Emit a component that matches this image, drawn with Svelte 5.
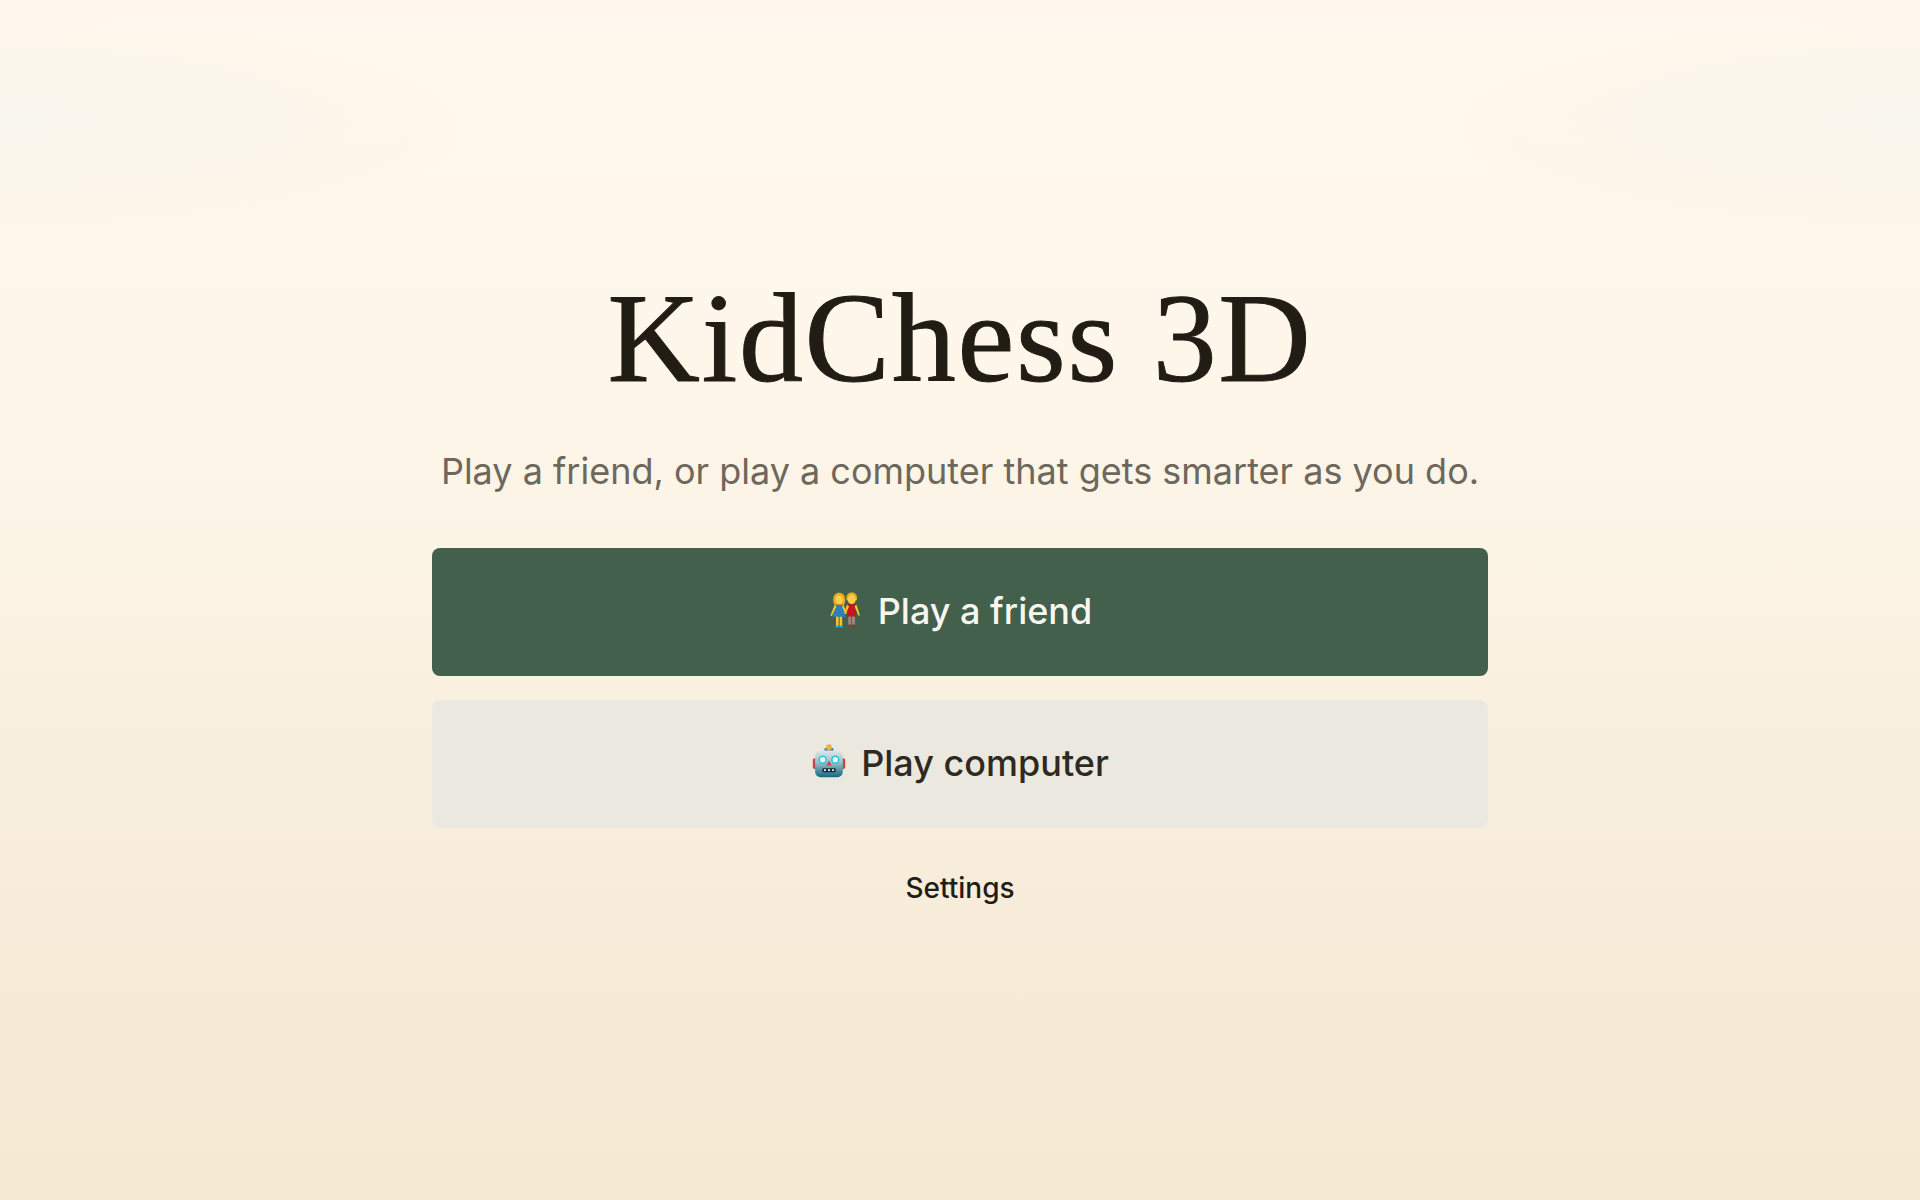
<script lang="ts">
  const subtitle = 'Play a friend, or play a computer that gets smarter as you do.';
</script>

<main class="home">
  <h1>KidChess 3D</h1>
  <p class="subtitle">{subtitle}</p>
  <div class="actions">
    <button class="btn primary">
      <svg class="emoji couple" viewBox="5 2 36 36" aria-hidden="true">
        <!-- woman -->
        <path d="M13 25h2.6v11h-2.6zM16.6 25h2.6v11h-2.6z" fill="#f4c534" />
        <path d="M12.6 35.4h3.2v2.2h-3.2zM16.4 35.4h3.2v2.2h-3.2z" fill="#2aa3d8" />
        <path d="M12.4 14.5h7.4l3 12.2H9.6z" fill="#2f7fbd" />
        <path d="M11.8 14.6 7.4 25.4l1.5.7 4.5-9.6zM20.4 14.6l3.4 8.6-1.5.8-3.3-7.4z" fill="#f4c534" />
        <path d="M10.2 9.4c0-4 2.6-6.6 6-6.6s6 2.6 6 6.6c0 2.4-.4 4-1.2 5.4h-9.6c-.8-1.4-1.2-3-1.2-5.4z" fill="#eba91f" />
        <ellipse cx="16.2" cy="9.6" rx="3.9" ry="4.4" fill="#f7d046" />
        <!-- man -->
        <path d="M25.2 25h3v10.6h-3zM29 25h3v10.6h-3z" fill="#9c8878" />
        <path d="M24.8 34.6h3.6v3h-3.6zM28.8 34.6h3.6v3h-3.6z" fill="#6d4a3a" />
        <path d="M23.8 14.2h9.8l-.9 12.2h-8z" fill="#c4161c" />
        <path d="M24 14.6 21.2 23.4l1.5.7 3.3-7.6zM33.4 14.6l3.6 10.6-1.5.6-3.9-9.2z" fill="#f4c534" />
        <path d="M23.4 7.6c0-3 2.3-5 5.3-5s5.3 2 5.3 5v2.6h-10.6z" fill="#eba91f" />
        <ellipse cx="28.7" cy="9.4" rx="4.1" ry="4.6" fill="#f7d046" />
      </svg>
      Play a friend
    </button>
    <button class="btn secondary">
      <svg class="emoji robot" viewBox="0 0 40 40" aria-hidden="true">
        <defs>
          <linearGradient id="robot-head" x1="0" y1="0" x2="0" y2="1">
            <stop offset="0" stop-color="#dfe7e8" />
            <stop offset="0.45" stop-color="#9cc0c8" />
            <stop offset="1" stop-color="#116a80" />
          </linearGradient>
        </defs>
        <rect x="2" y="17" width="5" height="12" rx="2" fill="#c9434a" />
        <rect x="33" y="17" width="5" height="12" rx="2" fill="#c9434a" />
        <rect x="15" y="5.5" width="10" height="4" rx="1.5" fill="#3f7f95" />
        <circle cx="20" cy="4.6" r="3.2" fill="#f2b33d" />
        <rect x="4.6" y="8.4" width="30.8" height="29.6" rx="6" fill="url(#robot-head)" />
        <circle cx="13" cy="18.6" r="4.6" fill="#24c2e6" />
        <circle cx="27" cy="18.6" r="4.6" fill="#24c2e6" />
        <circle cx="13" cy="18.6" r="3" fill="#eef7fa" />
        <circle cx="27" cy="18.6" r="3" fill="#eef7fa" />
        <path d="M20 19.4l3 5.6h-6z" fill="#d2444c" />
        <rect x="12.5" y="28" width="15" height="4.4" rx="1.4" fill="#12303c" />
        <path d="M14.4 29.2h2.2v2h-2.2zM18.9 29.2h2.2v2h-2.2zM23.4 29.2h2.2v2h-2.2z" fill="#e8eeee" />
      </svg>
      Play computer
    </button>
    <button class="link">Settings</button>
  </div>
</main>

<style>
  :global(body) {
    margin: 0;
    background: #f6ead6;
  }

  .home {
    height: 1200px;
    box-sizing: border-box;
    padding-top: 264px;
    display: flex;
    flex-direction: column;
    align-items: center;
    background:
      radial-gradient(ellipse 480px 110px at 0 120px, rgba(244, 244, 238, 0.6), rgba(244, 244, 238, 0)),
      radial-gradient(ellipse 480px 110px at 100% 120px, rgba(244, 244, 238, 0.6), rgba(244, 244, 238, 0)),
      linear-gradient(180deg, #fff7ee 0%, #fff8ec 4%, #fdf6e9 35%, #f8eedc 65%, #f5e9d3 100%);
    font-family: Inter, 'Liberation Sans', sans-serif;
  }

  h1 {
    margin: 0;
    font-family: 'Liberation Serif', serif;
    font-weight: 400;
    font-size: 128px;
    line-height: 148px;
    letter-spacing: 1.7px;
    -webkit-text-stroke: 1px #211d14;
    color: #211d14;
  }

  .subtitle {
    margin: 35px 0 0;
    font-size: 36px;
    line-height: 48px;
    color: #6e675b;
  }

  .actions {
    width: 1056px;
    margin-top: 53px;
    display: flex;
    flex-direction: column;
    gap: 24px;
  }

  .btn {
    height: 128px;
    padding: 0 0 2px;
    border: 0;
    border-radius: 8px;
    font: 500 36px Inter, 'Liberation Sans', sans-serif;
    display: flex;
    align-items: center;
    justify-content: center;
  }

  .emoji {
    width: 36px;
    height: 36px;
    margin-right: 14px;
  }

  .couple {
    margin-top: -2px;
  }

  .robot {
    margin-top: -4px;
  }

  .primary {
    background: #42604c;
    color: #f8f6ef;
  }

  .secondary {
    background: #ebe8e0;
    color: #2e2a22;
  }

  .link {
    margin-top: 18px;
    border: 0;
    background: none;
    font: 500 28px Inter, 'Liberation Sans', sans-serif;
    color: #211d14;
  }
</style>
